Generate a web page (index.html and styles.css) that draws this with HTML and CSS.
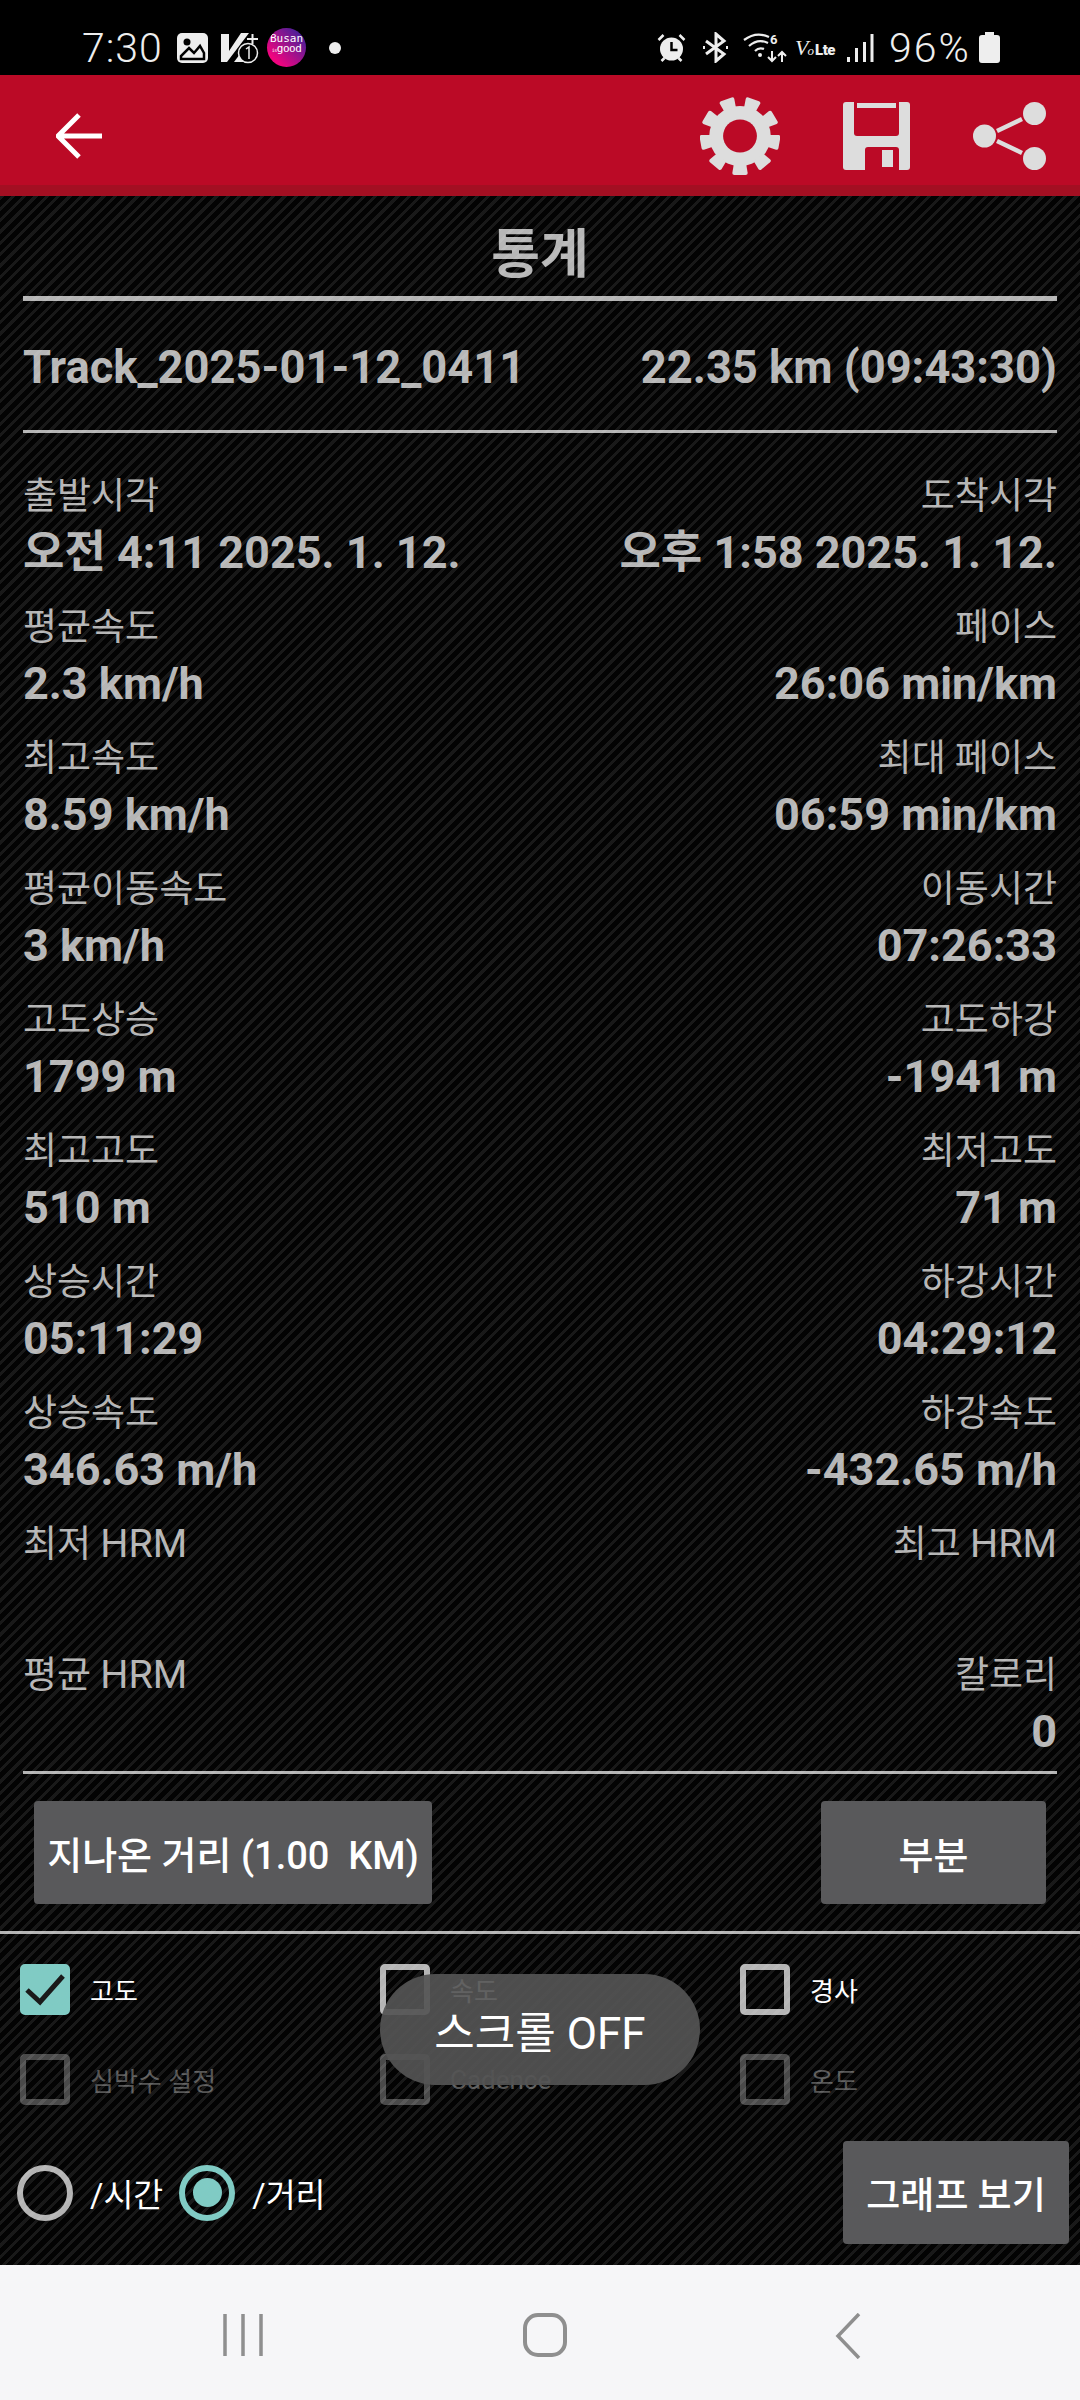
FILE: index.html
```html
<!DOCTYPE html>
<html lang="ko">
<head>
<meta charset="utf-8">
<title>통계</title>
<link rel="stylesheet" href="styles.css">
</head>
<body>
<div class="phone">
  <div class="status">
    <div class="status-left">
      <span class="clock">7:30</span>
      <svg class="s-img" width="31" height="30" viewBox="0 0 31 30"><rect width="31" height="30" rx="5" fill="#eee"/><circle cx="10" cy="9" r="3.500" fill="#000"/><path d="M4 26 L4 23 L12 15 L17 20 L23 13 L27 20 V26 Z" fill="none" stroke="#000" stroke-width="2.500"/></svg>
      <svg class="s-v" width="38" height="32" viewBox="0 0 38 32"><path d="M0 2h8v17L20 1h8L6 30H0z" fill="#eee"/><path d="M26 7h11M31.500 2v10" stroke="#eee" stroke-width="2"/><path d="M13 30l6-8 4 5v3z" fill="#eee"/><circle cx="27" cy="21" r="9.500" fill="#000" stroke="#eee" stroke-width="1.500"/><path d="M25 17l3-2v12" stroke="#eee" stroke-width="1.500" fill="none"/></svg>
      <span class="busan"><span class="busan-a">Busan</span><span class="busan-b"><small>is</small>good</span></span>
      <span class="dot"></span>
    </div>
    <div class="status-right">
      <svg class="s-alarm" width="29" height="30" viewBox="0 0 28 30"><circle cx="14" cy="16" r="11.500" fill="#eee"/><path d="M14 9v8h6" fill="none" stroke="#000" stroke-width="2.500"/><path d="M1 7l5-5M27 7l-5-5M4 28l3-3M24 28l-3-3" stroke="#eee" stroke-width="2.500"/></svg>
      <svg class="s-bt" width="27" height="31" viewBox="0 0 25 31"><path d="M3 9l18 13-8 7V2l8 7L3 22" fill="none" stroke="#eee" stroke-width="3"/><path d="M0 15.500h2M23 15.500h2" stroke="#eee" stroke-width="3"/></svg>
      <svg class="s-wifi" width="45" height="31" viewBox="0 0 43 31"><path d="M0 8Q12 -1 25 5M5 14Q14 6 24 11M11 19Q15 15 20 17" fill="none" stroke="#eee" stroke-width="2.200"/><circle cx="16" cy="23" r="2" fill="#eee"/><path d="M28 19v10M24 25l4 4 4-4M38 30V20M34 24l4-4 4 4" fill="none" stroke="#eee" stroke-width="2"/><text x="26" y="12" class="wifi6">6</text></svg>
      <span class="volte"><i>V<small>o</small></i><span>Lte</span></span>
      <svg class="s-sig" width="28" height="30" viewBox="0 0 27 30"><path d="M2 24v5M10 15v14M18 9v20M25.500 1v28" stroke="#eee" stroke-width="3"/></svg>
      <span class="pct">96%</span>
      <svg class="s-bat" width="21" height="31" viewBox="0 0 21 31"><path d="M6 0h9v3h3a3 3 0 0 1 3 3v22a3 3 0 0 1-3 3H3a3 3 0 0 1-3-3V6a3 3 0 0 1 3-3h3z" fill="#eee"/></svg>
    </div>
  </div>
  <header class="toolbar">
    <svg class="back" width="46" height="46" viewBox="0 0 46 46"><path d="M4 23h42M23 2L2 23l21 21" fill="none" stroke="#fff" stroke-width="5"/></svg>
    <div class="tools">
      <svg width="80" height="78" viewBox="0 0 78 78" preserveAspectRatio="none"><defs><path id="tooth" d="M33 67 L31.500 76 Q31.500 78 33.500 78 H44.500 Q46.500 78 46.500 76 L45 67z"/></defs><g fill="#ddd"><circle cx="39" cy="39" r="30"/><use href="#tooth"/><use href="#tooth" transform="rotate(40 39 39)"/><use href="#tooth" transform="rotate(80 39 39)"/><use href="#tooth" transform="rotate(120 39 39)"/><use href="#tooth" transform="rotate(160 39 39)"/><use href="#tooth" transform="rotate(200 39 39)"/><use href="#tooth" transform="rotate(240 39 39)"/><use href="#tooth" transform="rotate(280 39 39)"/><use href="#tooth" transform="rotate(320 39 39)"/></g><circle cx="39" cy="39" r="16.500" fill="#bb0a26"/></svg>
      <svg width="67" height="68" viewBox="0 0 67 68"><path d="M3 0h61a3 3 0 0 1 3 3v62a3 3 0 0 1-3 3H3a3 3 0 0 1-3-3V3a3 3 0 0 1 3-3z" fill="#ddd"/><path d="M11 0h45v31a3 3 0 0 1-3 3H14a3 3 0 0 1-3-3z" fill="#bb0a26"/><rect x="14" y="1" width="39" height="5" fill="#ddd"/><path d="M22 68V48a3 3 0 0 1 3-3h28a3 3 0 0 1 3 3v20z" fill="#bb0a26"/><rect x="39" y="48" width="11" height="17" fill="#ddd"/></svg>
      <svg width="73" height="68" viewBox="0 0 73 68"><path d="M24 29L49 17M24 39L49 51" stroke="#ddd" stroke-width="4.500"/><circle cx="11.500" cy="34" r="11.500" fill="#ddd"/><circle cx="61.500" cy="11.500" r="11.500" fill="#ddd"/><circle cx="61.500" cy="56.500" r="11.500" fill="#ddd"/></svg>
    </div>
  </header>
  <main class="content">
    <h1 class="title">통계</h1>
    <div class="track">
      <span>Track_2025-01-12_0411</span>
      <span>22.35 km (09:43:30)</span>
    </div>
    <div class="grid">
      <div class="cell"><div class="lab">출발시각</div><div class="val">오전 4:11 2025. 1. 12.</div></div>
      <div class="cell r"><div class="lab">도착시각</div><div class="val">오후 1:58 2025. 1. 12.</div></div>
      <div class="cell"><div class="lab">평균속도</div><div class="val">2.3 km/h</div></div>
      <div class="cell r"><div class="lab">페이스</div><div class="val">26:06 min/km</div></div>
      <div class="cell"><div class="lab">최고속도</div><div class="val">8.59 km/h</div></div>
      <div class="cell r"><div class="lab">최대 페이스</div><div class="val">06:59 min/km</div></div>
      <div class="cell"><div class="lab">평균이동속도</div><div class="val">3 km/h</div></div>
      <div class="cell r"><div class="lab">이동시간</div><div class="val">07:26:33</div></div>
      <div class="cell"><div class="lab">고도상승</div><div class="val">1799 m</div></div>
      <div class="cell r"><div class="lab">고도하강</div><div class="val">-1941 m</div></div>
      <div class="cell"><div class="lab">최고고도</div><div class="val">510 m</div></div>
      <div class="cell r"><div class="lab">최저고도</div><div class="val">71 m</div></div>
      <div class="cell"><div class="lab">상승시간</div><div class="val">05:11:29</div></div>
      <div class="cell r"><div class="lab">하강시간</div><div class="val">04:29:12</div></div>
      <div class="cell"><div class="lab">상승속도</div><div class="val">346.63 m/h</div></div>
      <div class="cell r"><div class="lab">하강속도</div><div class="val">-432.65 m/h</div></div>
      <div class="cell"><div class="lab">최저 <span class="lat">HRM</span></div><div class="val"></div></div>
      <div class="cell r"><div class="lab">최고 <span class="lat">HRM</span></div><div class="val"></div></div>
      <div class="cell"><div class="lab">평균 <span class="lat">HRM</span></div><div class="val"></div></div>
      <div class="cell r"><div class="lab">칼로리</div><div class="val">0</div></div>
    </div>
    <div class="buttons">
      <button class="btn dist">지나온 거리 (1.00&nbsp; KM)</button>
      <button class="btn part">부분</button>
    </div>
  </main>
  <section class="panel">
    <div class="checks">
      <label class="chk"><span class="box on"><svg width="50" height="51" viewBox="0 0 50 51"><path d="M7 26l13 12L43 12" fill="none" stroke="#1a1a1a" stroke-width="5"/></svg></span>고도</label>
      <label class="chk"><span class="box"></span>속도</label>
      <label class="chk"><span class="box"></span>경사</label>
      <label class="chk off"><span class="box"></span>심박수 설정</label>
      <label class="chk off"><span class="box"></span>Cadence</label>
      <label class="chk off"><span class="box"></span>온도</label>
    </div>
    <div class="bottom">
      <label class="radio"><span class="ring"></span>/시간</label>
      <label class="radio sel"><span class="ring"><span class="pip"></span></span>/거리</label>
      <button class="btn graph">그래프 보기</button>
    </div>
  </section>
  <div class="stripes"></div>
  <div class="toast">스크롤 OFF</div>
  <nav class="navbar">
    <svg width="42" height="44" viewBox="0 0 42 44"><path d="M3 1v42M21 1v42M39 1v42" stroke="#8f8f8f" stroke-width="3.500"/></svg>
    <svg width="44" height="44" viewBox="0 0 44 44"><rect x="2" y="2" width="40" height="40" rx="13" fill="none" stroke="#8f8f8f" stroke-width="4"/></svg>
    <svg width="26" height="46" viewBox="0 0 26 46"><path d="M24 1L3 23l21 22" fill="none" stroke="#8f8f8f" stroke-width="3.500"/></svg>
  </nav>
</div>
</body>
</html>
```
FILE: styles.css
```css
* { box-sizing: border-box; }
html, body { margin: 0; padding: 0; }
body { width: 1080px; height: 2400px; overflow: hidden; background: #000; font-family: Roboto, "Noto Sans CJK KR", sans-serif; }
.phone { position: relative; width: 1080px; height: 2400px; display: flex; flex-direction: column; background: #030303; }
.status { height: 75px; background: #000; color: #eee; display: flex; justify-content: space-between; align-items: center; padding: 20px 80px 0 82px; flex: none; }
.status-left, .status-right { display: flex; align-items: center; }
.clock { width: 77px; font-size: 41px; letter-spacing: 1px; font-weight: 300; white-space: nowrap; }
.s-img { margin-left: 18px; flex: none; }
.s-v { margin-left: 13px; flex: none; }
.busan { width: 39px; height: 39px; margin-left: 8px; border-radius: 50%; background: linear-gradient(45deg, #f0047f 20%, #4d1f98 85%); display: flex; flex-direction: column; align-items: center; justify-content: center; color: #fff; font-size: 11px; line-height: 11px; font-family: "DejaVu Sans Mono", monospace; overflow: hidden; padding-bottom: 8px; }
.busan-b { font-size: 11px; line-height: 10px; white-space: nowrap; letter-spacing: -.5px; }
.busan-b small { font-size: 5px; }
.dot { width: 12px; height: 12px; border-radius: 50%; background: #eee; margin-left: 23px; }
.s-bt { margin-left: 16px; }
.s-wifi { margin-left: 14px; }
.volte { display: inline-flex; align-items: baseline; justify-content: space-between; width: 40px; margin-left: 7px; white-space: nowrap; }
.volte i { font-family: "Liberation Serif", serif; font-weight: 400; font-size: 22px; letter-spacing: -1px; }
.volte i small { font-size: 13px; }
.volte span { font-size: 15px; font-weight: 900; letter-spacing: -.5px; }
.s-sig { margin-left: 11px; }
.wifi6 { font: 700 13px Roboto, sans-serif; fill: #eee; }
.pct { width: 82px; font-size: 41px; letter-spacing: 2px; font-weight: 300; margin: 0 8px 0 15px; white-space: nowrap; }
.toolbar { height: 121px; flex: none; background: #bb0a26; border-bottom: 11px solid #a30f22; display: flex; align-items: center; justify-content: space-between; padding: 11px 34px 0 56px; }
.tools { display: flex; align-items: center; gap: 63px; }
.content { flex: none; padding: 0 23px; color: #b6b6b6; }
.title { margin: 0; height: 105px; border-bottom: 5px solid #b4b4b4; font-size: 53px; font-weight: 700; line-height: 118px; text-align: center; color: #b6b6b6; }
.track { height: 132px; display: flex; justify-content: space-between; align-items: center; font-size: 45.3px; font-weight: 700; border-bottom: 3px solid #b4b4b4; padding-top: 3px; }
.grid { display: grid; grid-template-columns: 1fr 1fr; padding-top: 28px; border-bottom: 3px solid #b4b4b4; }
.cell { height: 131px; padding-top: 10px; white-space: nowrap; }
.cell.r { text-align: right; }
.lab { font-size: 37px; line-height: 52px; font-weight: 400; color: #b4b4b4; }
.lat { font-size: 39.5px; line-height: 40px; }
.val { font-size: 45px; line-height: 60px; font-weight: 700; color: #b6b6b6; }
.buttons { display: flex; justify-content: space-between; padding: 27px 11px 0; }
.btn { position: relative; z-index: 2; border: 0; border-radius: 4px; background: #59595b; color: #fff; font-family: inherit; font-weight: 500; padding: 0; white-space: nowrap; }
.dist { width: 398px; height: 103px; font-size: 38px; }
.part { width: 225px; height: 103px; font-size: 38px; }
.panel { flex: none; margin-top: 27px; border-top: 3px solid #b4b4b4; padding: 30px 0 0 0; color: #fff; }
.checks { display: grid; grid-template-columns: 360px 360px 1fr; grid-auto-rows: 90px; padding-left: 20px; }
.chk { display: flex; align-items: center; gap: 20px; font-size: 26px; height: 51px; color: #fff; }
.chk.off { color: #555; }
.box { width: 50px; height: 51px; border: 6px solid #b4b4b4; border-radius: 5px; flex: none; display: block; }
.box svg { display: block; margin: -6px; }
.chk.off .box { border-color: #4a4a4a; }
.box.on { position: relative; z-index: 2; background: #80cbc4; border-color: #80cbc4; }
.bottom { display: flex; align-items: center; height: 103px; margin-top: -3px; padding: 0 11px 0 17px; }
.radio { display: flex; align-items: center; gap: 17px; font-size: 32.5px; color: #fff; margin-right: 16px; white-space: nowrap; }
.ring { width: 56px; height: 56px; border: 6px solid #b4b4b4; border-radius: 50%; display: flex; align-items: center; justify-content: center; flex: none; }
.sel .ring { position: relative; z-index: 2; border-color: #80cbc4; }
.pip { width: 29px; height: 29px; border-radius: 50%; background: #80cbc4; }
.graph { margin-left: auto; width: 226px; height: 103px; font-size: 37px; }
.toast { position: absolute; z-index: 3; left: 380px; top: 1974px; width: 320px; height: 111px; border-radius: 56px; background: rgba(84,84,84,.92); color: #fff; font-size: 44px; display: flex; align-items: center; justify-content: center; }
.stripes { position: absolute; z-index: 1; left: 0; top: 196px; width: 1080px; height: 2069px; pointer-events: none; background: repeating-linear-gradient(135deg, rgba(255,255,255,.085) 0 3px, transparent 3px 8px); }
.navbar { position: absolute; z-index: 3; left: 0; top: 2265px; width: 1080px; height: 135px; background: #f6f6f8; }
.navbar svg { position: absolute; top: 48px; }
.navbar svg:nth-child(1) { left: 222px; }
.navbar svg:nth-child(2) { left: 523px; }
.navbar svg:nth-child(3) { left: 835px; }
```
